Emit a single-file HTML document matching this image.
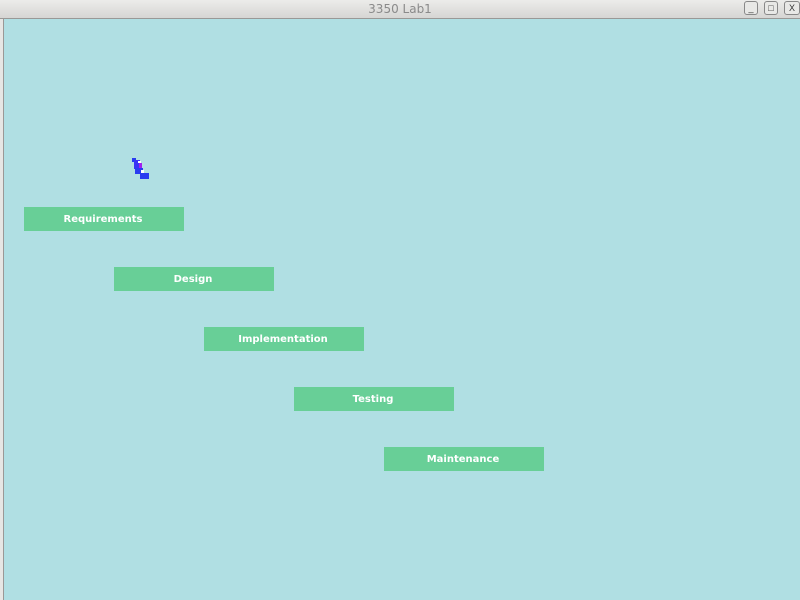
<!DOCTYPE html>
<html><head><style>
body{margin:0;width:800px;height:600px;overflow:hidden;background:#b0dfe3;font-family:"Liberation Sans",sans-serif;position:relative}
#tb{position:absolute;left:0;top:0;width:800px;height:18px;background:linear-gradient(#ececea,#d6d5d3);border-bottom:1px solid #9a9896;text-align:center;font-family:"DejaVu Sans",sans-serif;font-size:12px;line-height:18px;color:#8a8a8a}
#lb{position:absolute;left:0;top:19px;width:3px;height:581px;background:#e6e6e4;border-right:1px solid #9a9896}
.b{position:absolute;width:160px;height:24px;background:#68cf97;color:#fff;font-weight:bold;font-family:"DejaVu Sans",sans-serif;font-size:10px;line-height:25px;text-align:center;text-indent:-2px}
.wb{position:absolute;top:1px;width:14px;height:14px;border:1px solid #888;border-radius:3px;background:#e8e8e6;box-sizing:border-box;font-size:9px;line-height:12px;text-align:center;color:#333}
</style></head><body>
<div id="tb">3350 Lab1</div>
<div class="wb" style="left:744px">_</div><div class="wb" style="left:764px">□</div><div class="wb" style="left:784px;width:16px">X</div>
<div id="lb"></div>
<svg style="position:absolute;left:130px;top:156px" width="22" height="26">
<rect x="2" y="2" width="4" height="4" fill="#2a3cf0"/><rect x="4" y="4" width="6" height="9" fill="#3a33f5"/><rect x="9" y="7" width="3" height="6" fill="#a020f0"/><rect x="5" y="12" width="8" height="6" fill="#2a3cf0"/><rect x="10" y="17" width="9" height="6" fill="#2a3cf0"/><rect x="8" y="5" width="3" height="2" fill="#fff"/><rect x="11" y="14" width="3" height="3" fill="#fff"/>
</svg>
<div class="b" style="left:24px;top:207px">Requirements</div>
<div class="b" style="left:114px;top:267px">Design</div>
<div class="b" style="left:204px;top:327px">Implementation</div>
<div class="b" style="left:294px;top:387px">Testing</div>
<div class="b" style="left:384px;top:447px">Maintenance</div>
</body></html>
